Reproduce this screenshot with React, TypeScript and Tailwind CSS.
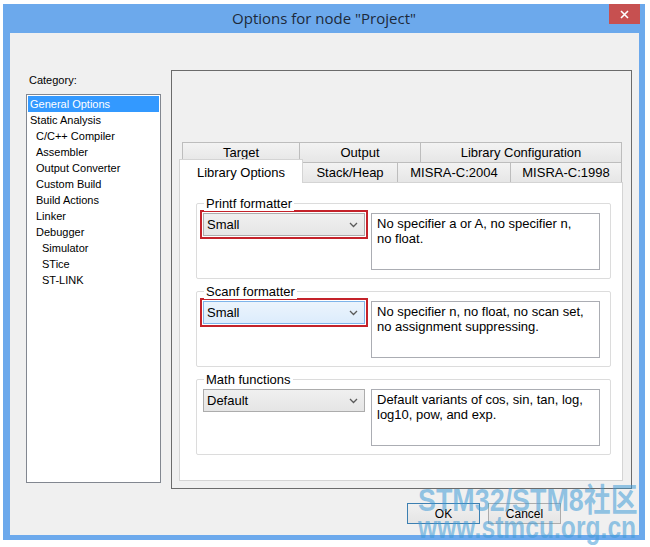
import React from "react";

type Category = { label: string; level: number };

const categories: Category[] = [
  { label: "General Options", level: 0 },
  { label: "Static Analysis", level: 0 },
  { label: "C/C++ Compiler", level: 1 },
  { label: "Assembler", level: 1 },
  { label: "Output Converter", level: 1 },
  { label: "Custom Build", level: 1 },
  { label: "Build Actions", level: 1 },
  { label: "Linker", level: 1 },
  { label: "Debugger", level: 1 },
  { label: "Simulator", level: 2 },
  { label: "STice", level: 2 },
  { label: "ST-LINK", level: 2 },
];

const indent = ["pl-[2px]", "pl-[8px]", "pl-[14px]"];

function Chevron() {
  return (
    <svg width="9" height="6" viewBox="0 0 9 6" className="shrink-0">
      <path d="M1 1l3.5 3.5L8 1" fill="none" stroke="#5a5a5a" strokeWidth="1.3" />
    </svg>
  );
}

function Combo({ value, hot }: { value: string; hot?: boolean }) {
  return (
    <div
      className={
        "flex h-[23px] w-full items-center justify-between border pl-[3px] pr-[6px] text-[13px] " +
        (hot
          ? "border-[#7eb4ea] bg-gradient-to-b from-[#ecf4fc] to-[#dcecfc]"
          : "border-[#acacac] bg-gradient-to-b from-[#f0f0f0] to-[#e5e5e5]")
      }
    >
      <span>{value}</span>
      <Chevron />
    </div>
  );
}

function OptionGroup({
  title,
  value,
  text,
  marked,
  hot,
}: {
  title: string;
  value: string;
  text: string[];
  marked?: boolean;
  hot?: boolean;
}) {
  return (
    <div className="relative h-[76px] w-[415px] rounded-[2px] border border-[#dcdcdc] pt-[6px]">
      {/* legend sitting on the top border */}
      <span className="absolute -top-[8px] left-[7px] bg-white px-[2px] text-[13px] leading-[15px]">
        {title}
      </span>
      <div className="flex items-start pl-[3px]">
        <div
          className={
            "h-[29px] w-[168px] border-2 p-px " + (marked ? "border-[#c4222a]" : "border-transparent")
          }
        >
          <Combo value={value} hot={hot} />
        </div>
        <div className="ml-[3px] mt-[3px] h-[57px] w-[229px] border border-[#abadb3] bg-white pl-[5px] pt-[2px] text-[13px] leading-[15px]">
          {text.map((line) => (
            <div key={line}>{line}</div>
          ))}
        </div>
      </div>
    </div>
  );
}

function Tab({ label, className }: { label: string; className: string }) {
  return (
    <div
      className={
        "flex h-[20px] items-center justify-center border-[#bdbdbd] bg-gradient-to-b from-[#f3f3f3] to-[#e6e6e6] text-[13px] " +
        className
      }
    >
      {label}
    </div>
  );
}

export default function App() {
  return (
    <div
      className="relative h-[547px] w-[650px] overflow-hidden bg-white text-black"
      style={{ fontFamily: '"Liberation Sans", Arial, sans-serif' }}
    >
      {/* dialog window */}
      <div className="ml-[3px] mt-[4px] flex h-[536px] w-[642px] flex-col bg-[#6ca9ec]">
        <div className="relative flex h-[29px] items-center justify-center">
          <span
            className="text-[15px] text-[#1d2a3a]"
            style={{ fontFamily: '"Open Sans", "Noto Sans", sans-serif' }}
          >
            Options for node "Project"
          </span>
          <div className="absolute right-[5px] top-0 flex h-[20px] w-[31px] items-center justify-center bg-[#c75050]">
            <svg width="9" height="9" viewBox="0 0 9 9">
              <path d="M1 1l7 7M8 1L1 8" stroke="#fff" strokeWidth="1.6" />
            </svg>
          </div>
        </div>

        <div className="ml-[7px] mr-[6px] flex h-[502px] flex-col bg-[#f0f0f0] pt-[37px]">
          <div className="flex items-start">
            {/* category tree */}
            <div className="ml-[16px] flex w-[135px] flex-col">
              <div className="mt-[4px] pl-[3px] text-[11px] leading-[13px]">Category:</div>
              <div className="mt-[7px] h-[389px] border border-[#828790] bg-white pt-px">
                {categories.map((c, i) => (
                  <div
                    key={c.label}
                    className={
                      "ml-px mr-[1px] h-[16px] text-[11px] leading-[16px] " +
                      indent[c.level] +
                      (i === 0 ? " bg-[#3399ff] text-white" : "")
                    }
                  >
                    {c.label}
                  </div>
                ))}
              </div>
            </div>

            {/* options page */}
            <div className="ml-[10px] flex h-[419px] w-[461px] flex-col border border-[#6b6b6b] pb-[7px] pl-[7px] pr-[8px] pt-[71px]">
              <div className="ml-[3px] flex">
                <Tab label="Target" className="w-[118px] border-l border-r border-t" />
                <Tab label="Output" className="w-[121px] border-r border-t" />
                <Tab label="Library Configuration" className="w-[201px] border-r border-t" />
              </div>
              <div className="flex h-[20px] items-end">
                <div className="relative z-10 -mb-px flex h-[24px] w-[124px] items-start justify-center border-l border-r border-t border-[#d4d4d4] bg-white pt-[3px] text-[13px]">
                  Library Options
                </div>
                <Tab label="Stack/Heap" className="w-[95px] border-r border-t" />
                <Tab label="MISRA-C:2004" className="w-[113px] border-r border-t" />
                <Tab label="MISRA-C:1998" className="w-[111px] border-r border-t" />
              </div>
              <div className="flex h-[299px] flex-col gap-[12px] border border-[#d4d4d4] bg-white pl-[16px] pt-[20px]">
                <OptionGroup
                  title="Printf formatter"
                  value="Small"
                  marked
                  text={["No specifier a or A, no specifier n,", "no float."]}
                />
                <OptionGroup
                  title="Scanf formatter"
                  value="Small"
                  marked
                  hot
                  text={["No specifier n, no float, no scan set,", "no assignment suppressing."]}
                />
                <OptionGroup
                  title="Math functions"
                  value="Default"
                  text={["Default variants of cos, sin, tan, log,", "log10, pow, and exp."]}
                />
              </div>
            </div>
          </div>

          <div className="ml-[397px] mt-[14px] flex gap-[8px] text-[12px]">
            <button className="flex h-[21px] w-[73px] items-center justify-center border border-[#3c7fb1] bg-gradient-to-b from-[#f0f0f0] to-[#e5e5e5]">
              OK
            </button>
            <button className="flex h-[21px] w-[73px] items-center justify-center border border-[#acacac] bg-gradient-to-b from-[#f0f0f0] to-[#e5e5e5]">
              Cancel
            </button>
          </div>
        </div>
      </div>

      {/* site stamp over the lower right corner */}
      <div
        className="pointer-events-none absolute left-[418px] top-[487px] whitespace-nowrap text-[32px] font-bold leading-[27px] text-[#3d9ad6]/55"
        style={{ fontFamily: '"Liberation Sans", "Noto Sans CJK SC", sans-serif' }}
      >
        <div className="origin-left scale-x-[0.84]">STM32/STM8社区</div>
        <div className="origin-left scale-x-[0.77]">www.stmcu.org.cn</div>
      </div>
    </div>
  );
}
